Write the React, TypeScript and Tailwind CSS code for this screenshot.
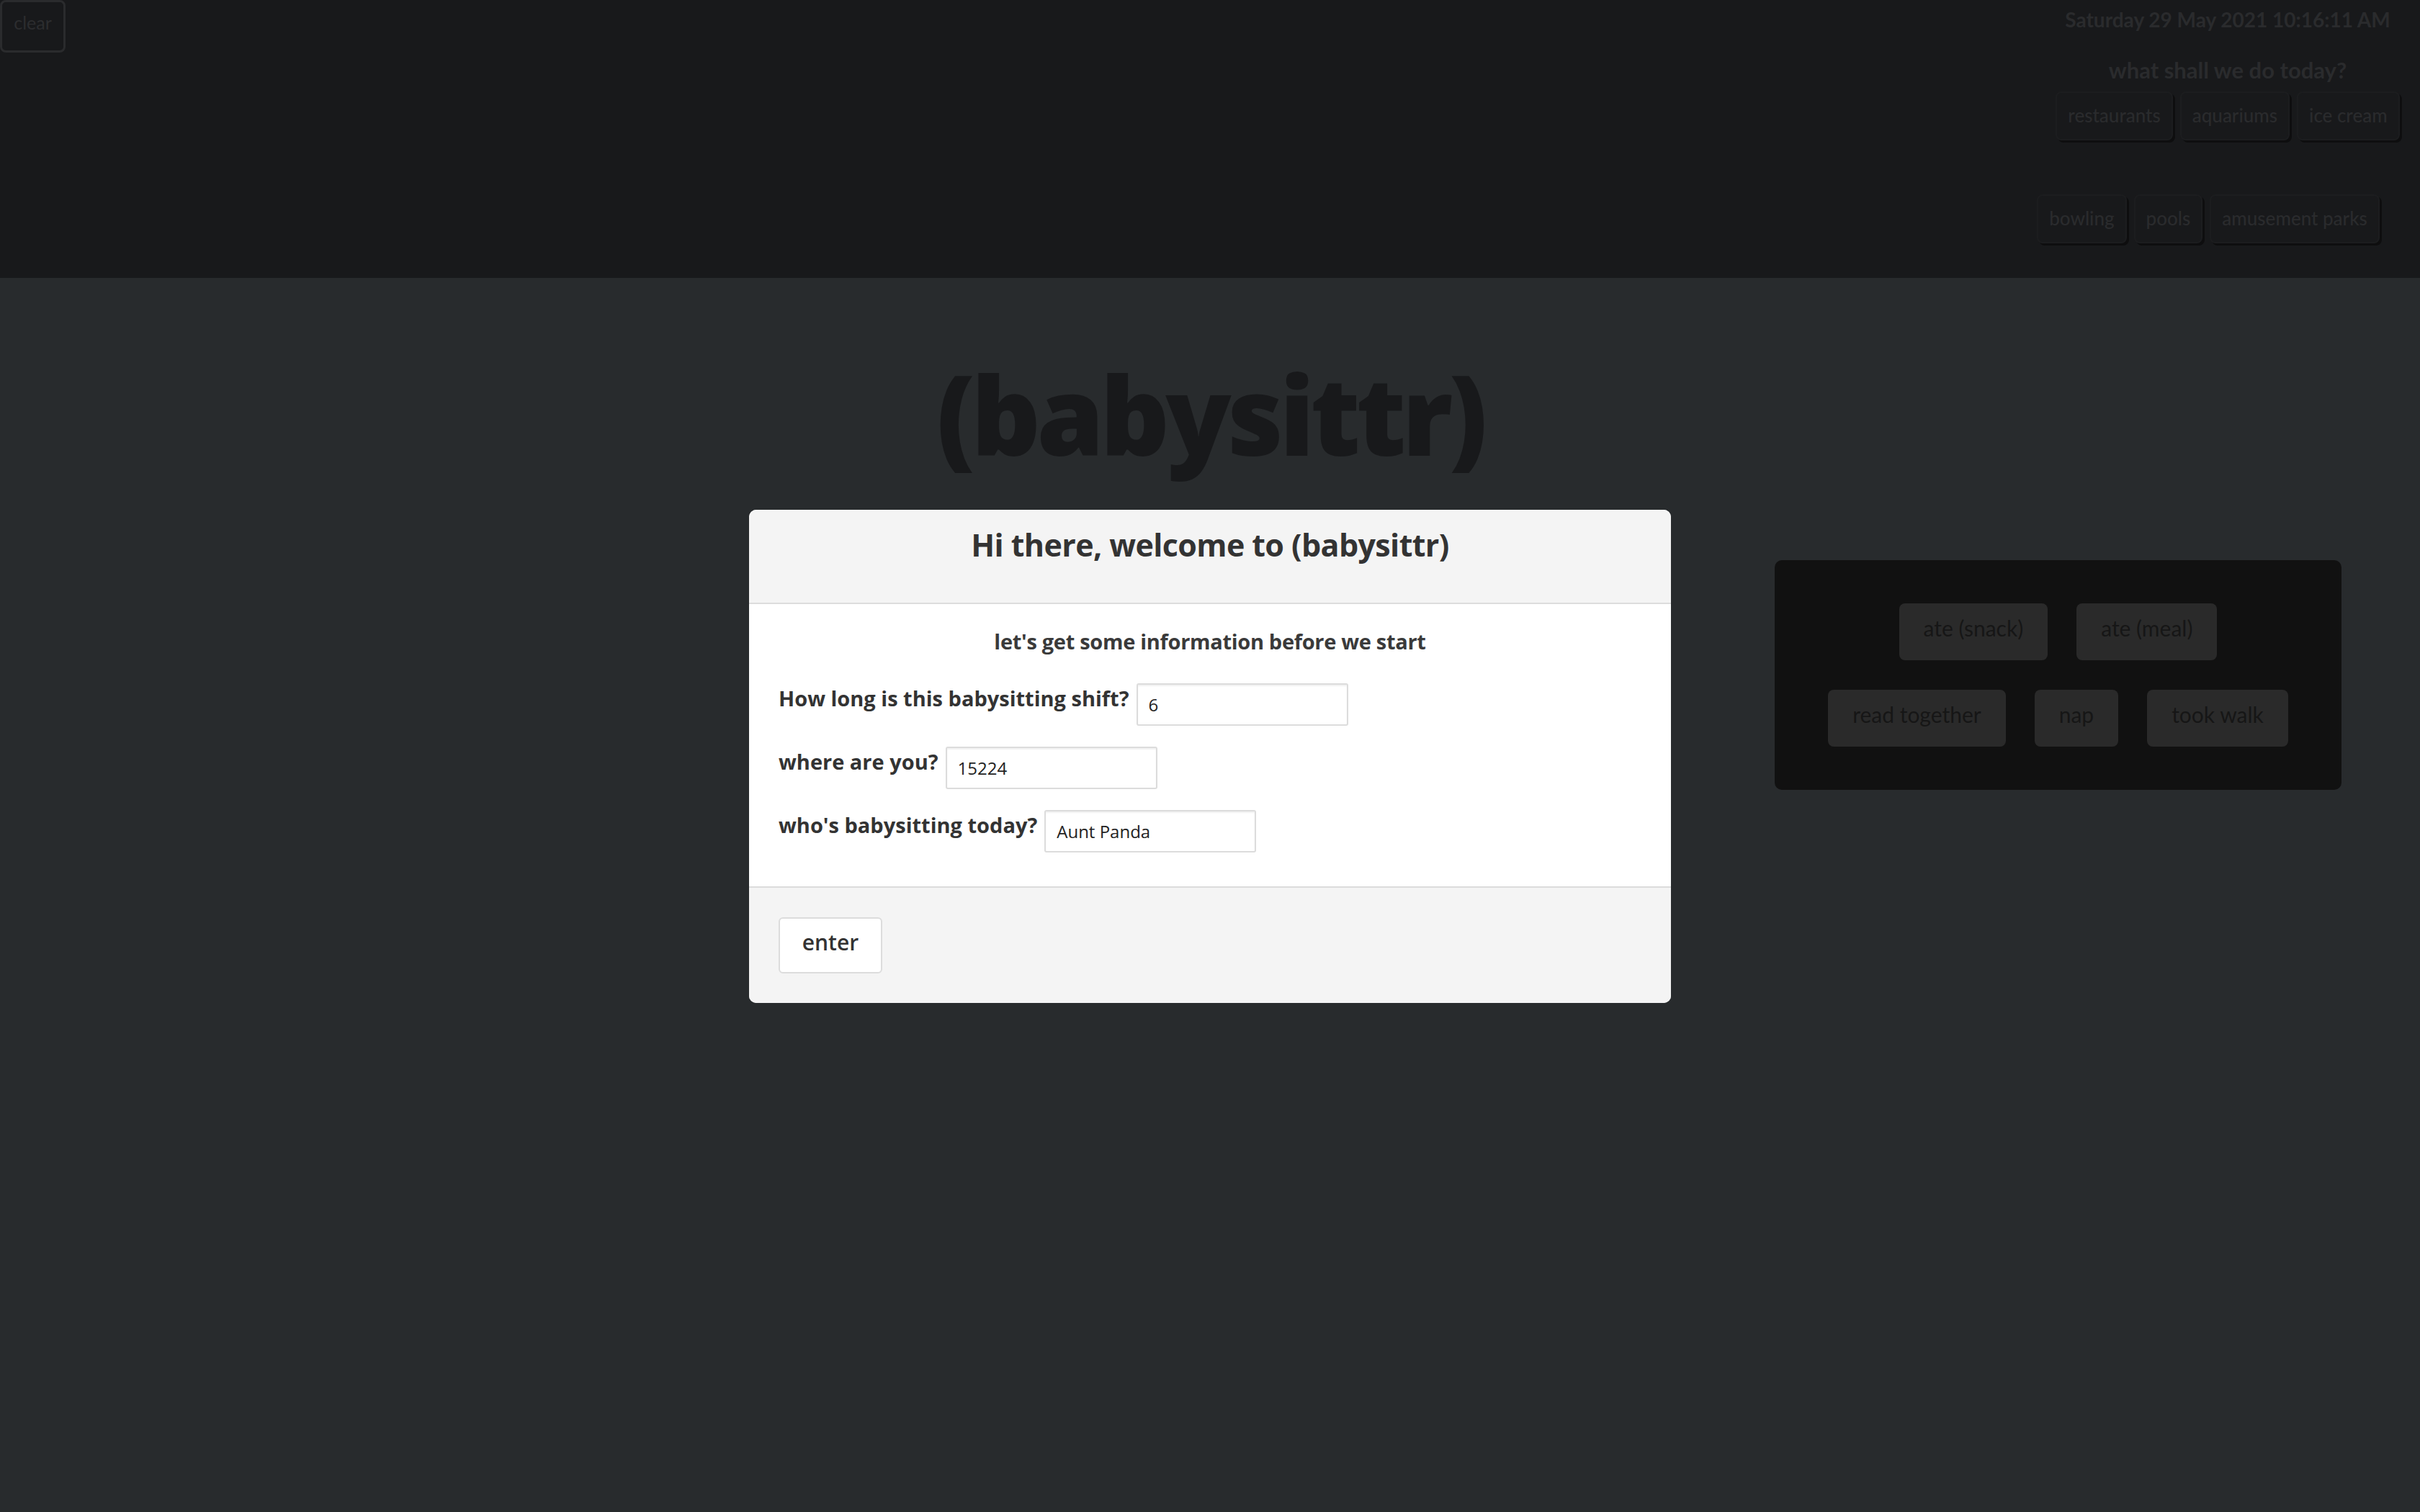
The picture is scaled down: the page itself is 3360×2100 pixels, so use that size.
import React from 'react';

const topRow1 = ['restaurants', 'aquariums', 'ice cream'];
const topRow2 = ['bowling', 'pools', 'amusement parks'];

const TopButton: React.FC<{ label: string }> = ({ label }) => (
  <button className="h-[68px] px-[15px] pt-[12px] flex items-start rounded-[8px] border-2 border-[#1c1d1f] bg-[#18191b] shadow-[3px_3px_0_#0e0e0f] text-[26px] text-[#2a2b2d] font-medium">
    {label}
  </button>
);

const ActivityButton: React.FC<{ label: string }> = ({ label }) => (
  <button className="h-[79px] mx-[20px] px-[34px] pt-[12px] flex items-start rounded-[8px] bg-[#2a2a2a] text-[30px] text-[#161616]">
    {label}
  </button>
);

const Field: React.FC<{ label: string; value: string }> = ({ label, value }) => (
  <div className="flex items-start gap-[10px] mb-[29px]">
    <label className="text-[29px] font-bold text-[#333333] leading-[42px] tracking-[0px]" style={{ fontFamily: '"Open Sans", sans-serif' }}>
      {label}
    </label>
    <input
      readOnly
      value={value}
      className="w-[294px] h-[59px] border-2 border-[#dcdcdc] rounded-[3px] shadow-[inset_0_2px_2px_rgba(0,0,0,0.06)] px-[15px] text-[24px] text-[#222] bg-white outline-none"
      style={{ fontFamily: '"Open Sans", sans-serif' }}
    />
  </div>
);

export default function App() {
  return (
    <div className="min-h-screen w-full bg-[#282b2d] relative" style={{ fontFamily: 'Lato, "Open Sans", sans-serif' }}>
      {/* top bar */}
      <div className="h-[386px] bg-[#18191b] flex justify-between">
        <div>
          <button className="w-[91px] h-[73px] border-[3px] border-[#2a2b2d] rounded-[8px] text-[25px] text-[#2c2d2f] flex items-start justify-center pt-[10px]">
            clear
          </button>
        </div>
        <div className="w-[530px] mr-[2px] flex flex-col items-center">
          <div className="mt-[6px] text-[28px] font-bold text-[#2a2b2d]">Saturday 29 May 2021 10:16:11 AM</div>
          <div className="mt-[26px] text-[31px] font-bold text-[#2a2b2d]">what shall we do today?</div>
          <div className="mt-[6px] flex gap-[10px]">
            {topRow1.map((l) => (
              <TopButton key={l} label={l} />
            ))}
          </div>
          <div className="mt-[75px] flex gap-[10px] pr-[54px]">
            {topRow2.map((l) => (
              <TopButton key={l} label={l} />
            ))}
          </div>
        </div>
      </div>

      {/* main */}
      <div className="flex flex-col pb-[200px]">
        <h1
          className="mt-[107px] text-center text-[150px] leading-[1.1] font-extrabold text-[#18191b] tracking-[-5.5px]"
          style={{ fontFamily: '"Open Sans", sans-serif' }}
        >
          (babysittr)
        </h1>
        <div className="flex justify-end pr-[109px] mt-[120px]">
          <div className="w-[787px] h-[319px] bg-[#111111] rounded-[10px] flex flex-col items-center pt-[60px] gap-[41px]">
            <div className="flex">
              <ActivityButton label="ate (snack)" />
              <ActivityButton label="ate (meal)" />
            </div>
            <div className="flex">
              <ActivityButton label="read together" />
              <ActivityButton label="nap" />
              <ActivityButton label="took walk" />
            </div>
          </div>
        </div>
      </div>

      {/* modal */}
      <div className="absolute inset-0 flex justify-center items-start pt-[708px]">
        <div className="w-[1280px] rounded-[10px] overflow-hidden bg-white" style={{ fontFamily: '"Open Sans", sans-serif' }}>
          <div className="h-[131px] bg-[#f4f4f4] border-b-2 border-[#dcdcdc] flex justify-center pt-[20px]">
            <h2 className="text-[43px] font-bold text-[#333333] leading-[58px] tracking-[-0.6px]">Hi there, welcome to (babysittr)</h2>
          </div>
          <div className="px-[41px] pt-[30px] pb-[18px]">
            <p className="text-center text-[29px] font-bold text-[#3a3a3a] leading-[44px] mb-[36px] tracking-[-0.3px]">
              let's get some information before we start
            </p>
            <Field label="How long is this babysitting shift?" value="6" />
            <Field label="where are you?" value="15224" />
            <Field label="who's babysitting today?" value="Aunt Panda" />
          </div>
          <div className="h-[162px] bg-[#f4f4f4] border-t-2 border-[#dcdcdc] px-[41px] pt-[41px]">
            <button className="w-[144px] h-[78px] bg-white border-2 border-[#dcdcdc] rounded-[6px] text-[30px] text-[#333] font-semibold flex items-start justify-center pt-[10px]">
              enter
            </button>
          </div>
        </div>
      </div>
    </div>
  );
}
